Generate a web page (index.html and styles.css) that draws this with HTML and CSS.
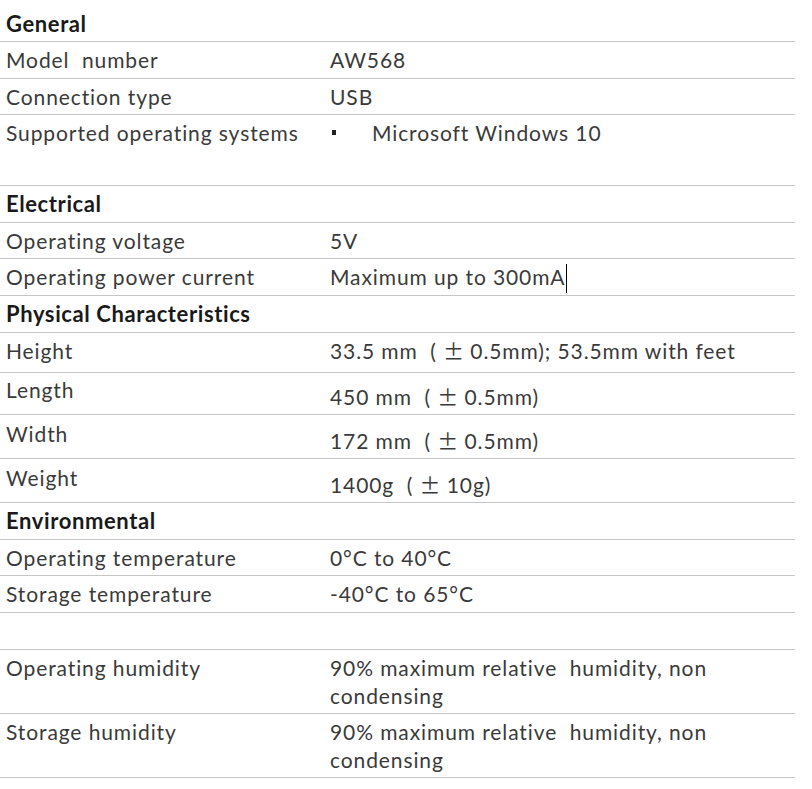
FILE: index.html
```html
<!DOCTYPE html>
<html lang="en">
<head>
<meta charset="utf-8">
<title>Specifications</title>
<link rel="stylesheet" href="styles.css">
</head>
<body>
<div class="specs">
  <div class="row head first"><div class="cell">General</div><div class="cell"></div></div>
  <div class="row"><div class="cell">Model&nbsp; number</div><div class="cell">AW568</div></div>
  <div class="row short"><div class="cell">Connection type</div><div class="cell">USB</div></div>
  <div class="row os"><div class="cell">Supported operating systems</div><div class="cell"><ul class="list"><li>Microsoft Windows 10</li></ul></div></div>
  <div class="row head"><div class="cell">Electrical</div><div class="cell"></div></div>
  <div class="row short"><div class="cell">Operating voltage</div><div class="cell">5V</div></div>
  <div class="row"><div class="cell">Operating power current</div><div class="cell">Maximum up to 300mA<span class="caret"></span></div></div>
  <div class="row head"><div class="cell">Physical Characteristics</div><div class="cell"></div></div>
  <div class="row dim-height"><div class="cell">Height</div><div class="cell">33.5 mm&nbsp; (&nbsp;<span class="pm">±</span> 0.5mm); 53.5mm with feet</div></div>
  <div class="row dim-length"><div class="cell">Length</div><div class="cell val">450 mm&nbsp; (&nbsp;<span class="pm">±</span> 0.5mm)</div></div>
  <div class="row dim-width"><div class="cell">Width</div><div class="cell val">172 mm&nbsp; (&nbsp;<span class="pm">±</span> 0.5mm)</div></div>
  <div class="row dim-weight"><div class="cell">Weight</div><div class="cell val">1400g&nbsp; (&nbsp;<span class="pm">±</span> 10g)</div></div>
  <div class="row head"><div class="cell">Environmental</div><div class="cell"></div></div>
  <div class="row short"><div class="cell">Operating temperature</div><div class="cell">0°C to 40°C</div></div>
  <div class="row"><div class="cell">Storage temperature</div><div class="cell">-40°C to 65°C</div></div>
  <div class="row"><div class="cell">&nbsp;</div><div class="cell"></div></div>
  <div class="row"><div class="cell">Operating humidity</div><div class="cell">90% maximum relative&nbsp; humidity, non condensing</div></div>
  <div class="row"><div class="cell">Storage humidity</div><div class="cell">90% maximum relative&nbsp; humidity, non condensing</div></div>
</div>
</body>
</html>
```

FILE: styles.css
```css
* {
  box-sizing: border-box;
  margin: 0;
  padding: 0;
}

body {
  margin: 0;
  background: #ffffff;
  font-family: Lato, "Open Sans", sans-serif;
  font-size: 21px;
  letter-spacing: 0.9px;
  color: #3a3a3a;
}

.specs {
  width: 795px;
}

.row {
  display: grid;
  grid-template-columns: 324px 1fr;
  min-height: 37px;
  border-bottom: 1px solid #c6c6c6;
}

.row.short {
  min-height: 36px;
  height: 36px;
}

.cell {
  padding: 4px 6px;
  line-height: 27.5px;
}

.head .cell {
  font-size: 22px;
  font-weight: 700;
  letter-spacing: 0.6px;
  color: #1a1a1a;
}

.head.first {
  height: 42px;
}

.head.first .cell {
  padding-top: 9.5px;
}

.os {
  height: 71px;
}

.list {
  list-style: none;
}

.list li {
  display: flex;
  align-items: center;
}

.list li::before {
  content: "";
  width: 4px;
  height: 5px;
  background: #222222;
  margin-left: 2px;
  margin-right: 36px;
}

.caret {
  display: inline-block;
  width: 1px;
  height: 29.5px;
  margin-bottom: -3px;
  background: #000000;
  vertical-align: -5px;
}

.pm {
  font-family: "Noto Sans CJK SC", "Noto Sans CJK JP", Lato, sans-serif;
  line-height: 16px;
  letter-spacing: 0;
}

.dim-height {
  height: 40px;
}

.dim-length {
  height: 42px;
}

.dim-length .cell {
  padding-top: 3px;
}

.dim-width {
  height: 44px;
}

.dim-width .cell {
  padding-top: 5px;
}

.dim-weight {
  height: 44px;
}

.dim-weight .cell {
  padding-top: 5px;
}

.dim-length .val {
  padding-top: 10px;
}

.dim-width .val,
.dim-weight .val {
  padding-top: 12px;
}
```
